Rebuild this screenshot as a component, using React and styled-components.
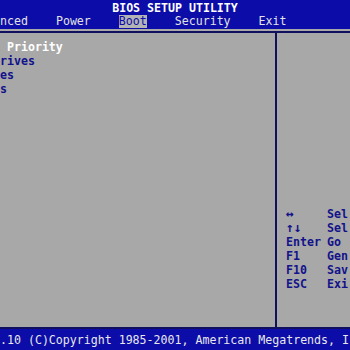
import React from "react";
import styled, { createGlobalStyle } from "styled-components";

const GlobalStyle = createGlobalStyle`
  html, body {
    margin: 0;
    padding: 0;
    background: #a8a8a8;
  }
`;

const Screen = styled.div`
  display: flex;
  flex-direction: column;

  width: 350px;
  height: 350px;

  background: #a8a8a8;
  font-family: "DejaVu Sans Mono", "Liberation Mono", monospace;
  font-size: 11.6px;
  white-space: pre;

  overflow: hidden;
`;

const Header = styled.div`
  display: flex;
  flex-direction: column;

  height: 29px;
  background: #0c0ca8;
`;

const Title = styled.div`
  height: 14px;
  padding-top: 1px;

  line-height: 14px;
  text-align: center;
  font-weight: 700;
  color: #ffffff;
`;

const MenuBar = styled.div`
  display: flex;
  gap: 28px;
  height: 13px;
`;

const MenuItem = styled.span`
  line-height: 13px;
  color: ${(p) => (p.$active ? "#0c0ca8" : "#e2e2e2")};
  background: ${(p) => (p.$active ? "#b4b4b4" : "transparent")};
`;

const Main = styled.div`
  flex: 1;
  display: flex;
  flex-direction: column;

  padding-top: 2px;
`;

const Panels = styled.div`
  flex: 1;
  display: flex;

  border-top: 2px solid #10105e;
  border-bottom: 2px solid #10105e;
`;

const LeftPanel = styled.div`
  display: flex;
  flex-direction: column;
  flex-shrink: 0;

  width: 275px;
  padding-top: 7px;
`;

const Divider = styled.div`
  flex-shrink: 0;
  width: 2px;
  background: #10105e;
`;

const RightPanel = styled.div`
  flex: 1;
  min-width: 0;
  display: flex;
  flex-direction: column;
  justify-content: flex-end;

  padding: 0 0 36px 9px;
`;

const Line = styled.div`
  height: 14px;
  line-height: 14px;
  font-weight: 700;
  color: ${(p) => (p.$selected ? "#ffffff" : "#12128a")};
`;

const HelpRow = styled.div`
  display: grid;
  grid-template-columns: 41px 1fr;

  height: 14px;
  line-height: 14px;
  font-weight: 700;
  color: #12128a;
`;

const HelpKey = styled.span`
  font-size: ${(p) => (p.$arrow ? "13px" : "inherit")};
`;

const Footer = styled.div`
  height: 20px;
  padding-top: 1px;

  line-height: 20px;
  background: #0c0ca8;
  color: #e8e8e8;
`;

const menu = ["nced", "Power", "Boot", "Security", "Exit"];
const entries = [" Priority", "rives", "es", "s"];
const help = [
  ["\u2194", "Sel", true],
  ["\u2191\u2193", "Sel", true],
  ["Enter", "Go"],
  ["F1", "Gen"],
  ["F10", "Sav"],
  ["ESC", "Exi"],
];

const App = () => {
  return (
    <Screen>
      <GlobalStyle />
      <Header>
        <Title>BIOS SETUP UTILITY</Title>
        <MenuBar>
          {menu.map((item) => (
            <MenuItem key={item} $active={item === "Boot"}>
              {item}
            </MenuItem>
          ))}
        </MenuBar>
      </Header>

      <Main>
        <Panels>
          <LeftPanel>
            {entries.map((entry, index) => (
              <Line key={index} $selected={index === 0}>
                {entry}
              </Line>
            ))}
          </LeftPanel>
          <Divider />
          <RightPanel>
            {help.map(([key, text, arrow]) => (
              <HelpRow key={key}>
                <HelpKey $arrow={arrow}>{key}</HelpKey>
                <span>{text}</span>
              </HelpRow>
            ))}
          </RightPanel>
        </Panels>
      </Main>

      <Footer>.10 (C)Copyright 1985-2001, American Megatrends, I</Footer>
    </Screen>
  );
};

export default App;
